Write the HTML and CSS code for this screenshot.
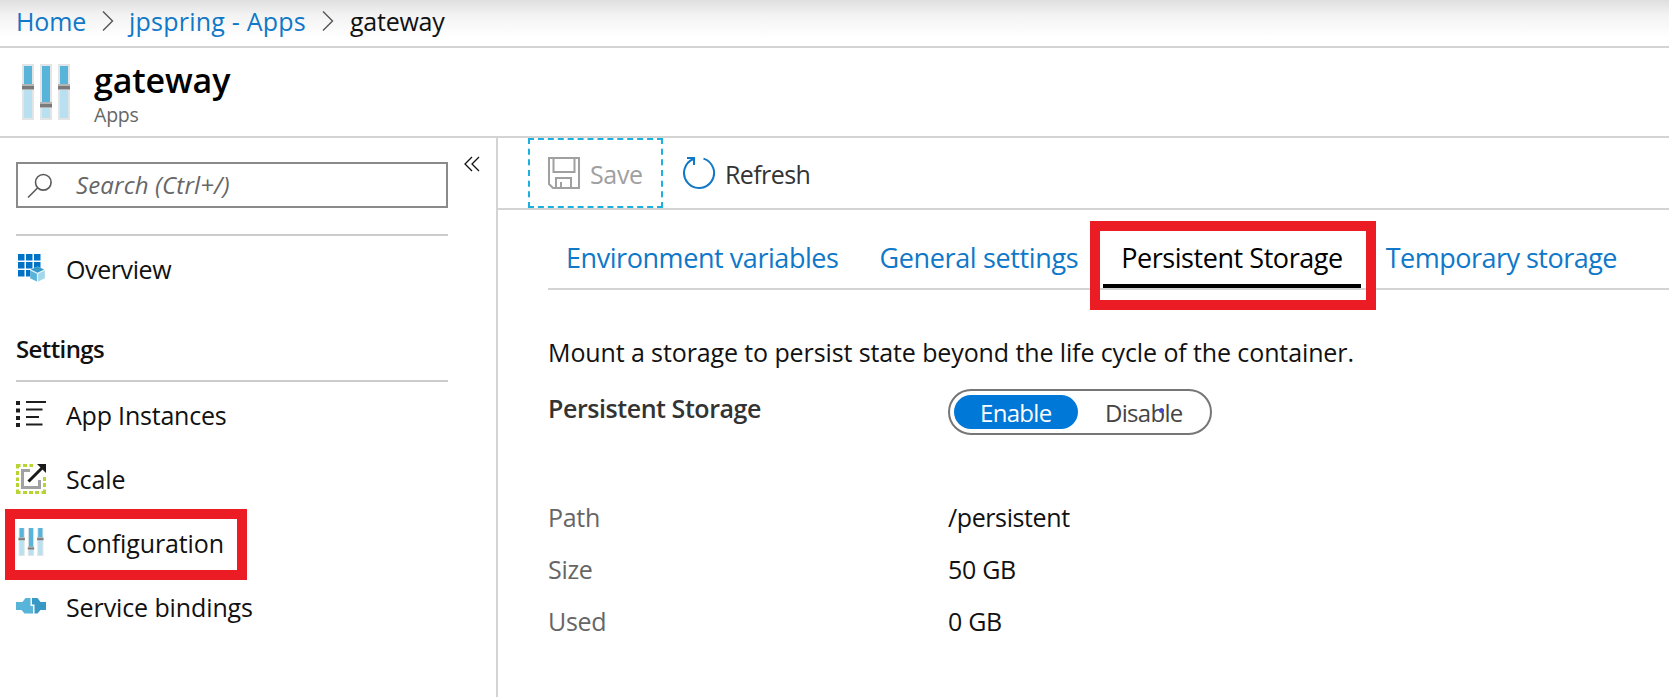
FILE: index.html
```html
<!DOCTYPE html>
<html lang="en">
<head>
<meta charset="utf-8">
<title>gateway - Configuration</title>
<link rel="stylesheet" href="styles.css">
</head>
<body>
<svg class="defs" aria-hidden="true">
  <defs>
    <g id="sliders">
      <path d="M0 0h12v56H0zM18 0h12v56H18zM36 0h12v56H36z" fill="#e2e4e5"/>
      <path d="M2 2h8v52H2zM20 2h8v52h-8zM38 2h8v52h-8z" fill="#b9e0f0"/>
      <path d="M2 2h8v19H2zM20 2h8v37h-8zM38 2h8v19h-8z" fill="#59b4d9"/>
      <path d="M0 20h12v6H0zM18 38h12v6H18zM36 20h12v6H36z" fill="#b5b5b5"/>
      <path d="M0 22h12v3H0zM18 40h12v3H18zM36 22h12v3H36z" fill="#7a7a7a"/>
    </g>
  </defs>
</svg>

<nav class="crumbs">
  <a class="crumb crumb-home">Home</a>
  <svg class="chevron" width="12" height="22" viewBox="0 0 12 22"><path d="M1 1.5 10.5 11 1 20.5"/></svg>
  <a class="crumb crumb-apps">jpspring - Apps</a>
  <svg class="chevron" width="12" height="22" viewBox="0 0 12 22"><path d="M1 1.5 10.5 11 1 20.5"/></svg>
  <span class="crumb crumb-current">gateway</span>
</nav>

<header class="header">
  <svg class="header-icon" width="48" height="56" viewBox="0 0 48 56"><use href="#sliders"/></svg>
  <div class="header-text">
    <h1 class="title">gateway</h1>
    <div class="subtitle">Apps</div>
  </div>
</header>

<div class="body">
  <aside class="sidebar">
    <div class="search-row">
      <div class="search">
        <svg width="26" height="26" viewBox="0 0 26 26" fill="none" stroke="#5a5a5a" stroke-width="1.6"><circle cx="16.3" cy="9.3" r="7.8"/><path d="M10.5 15 1 24.5"/></svg>
        <span class="placeholder">Search (Ctrl+/)</span>
      </div>
      <svg class="collapse" width="16" height="16" viewBox="0 0 16 16" fill="none" stroke="#111" stroke-width="1.3"><path d="M8 1 1 8l7 7M15 1 8 8l7 7"/></svg>
    </div>

    <div class="group-first">
      <a class="item item-overview">
        <svg width="30" height="30" viewBox="0 0 30 30">
          <path d="M2 0h6.500v6.500H2zM10 0h6.500v6.500H10zM18 0h6.500v6.500H18zM2 8h6.500v6.500H2zM10 8h6.500v6.500H10zM18 8h6.500v6.500H18zM2 16h6.500v6.500H2zM10 16h6.500v6.500H10z" fill="#0072c6"/>
          <path d="m21.500 12.500 7.300 3.300v8.400l-7.300 3.600-7.300-3.600v-8.400z" fill="#e6f4fa"/>
          <path d="m21.500 12.600 6.600 3-6.600 3.100-6.600-3.100z" fill="#3999c6"/>
          <path d="m14.200 16.600 6.700 3.200v7.800l-6.700-3.300z" fill="#59b4d9"/>
          <path d="m28.800 16.600-6.700 3.200v7.800l6.700-3.300z" fill="#a3d7ec"/>
        </svg>
        <span>Overview</span>
      </a>
    </div>

    <h2 class="group-title">Settings</h2>
    <div class="group">
      <a class="item item-instances">
        <svg width="30" height="30" viewBox="0 0 30 30" fill="#1e1e1e"><path d="M0 1h4v4H0zM0 8.500h4v4H0zM0 16h4v4H0zM0 23h4v4H0zM10 1h20v2H10zM10 8.500h16.500v2H10zM10 16h13v2H10zM10 23.500h16.500v2H10z"/></svg>
        <span>App Instances</span>
      </a>
      <a class="item item-scale">
        <svg width="30" height="30" viewBox="0 0 30 30" fill="none">
          <path d="M0 4.500V0h4.500v3H3v1.500zM7 0h4v3H7zM13.500 0H17v3h-3.500zM0 7h3v4H0zM0 13.500h3v3.500H0zM0 19h3v4H0zM0 25.500h3V27h1.500v3H0zM7 27h4v3H7zM13 27h4v3h-4zM19 27h4v3h-4zM25.500 27H27v-1.500h3V30h-4.500zM27 13h3v4h-3zM27 19h3v4h-3z" fill="#b8d432"/>
          <path d="M14 6.500H6.500v17h17V16" stroke="#a0a1a2" stroke-width="3"/>
          <path d="M12.500 17.500 26 4" stroke="#1a1a1a" stroke-width="3"/>
          <path d="M21 0h9v9z" fill="#1a1a1a"/>
        </svg>
        <span>Scale</span>
      </a>
      <a class="item item-config">
        <svg width="30" height="30" viewBox="-5 2 58 58"><use href="#sliders"/></svg>
        <span>Configuration</span>
        <i class="mark mark-config"></i>
      </a>
      <a class="item item-bindings">
        <svg width="30" height="30" viewBox="0 0 30 30">
          <path d="M0 10h6.500l3-4h5v8H17v7.500H8.500l-3-3.500H0z" fill="#59b4d9"/>
          <path d="M16 6h5.500l3 4H30v8h-5.500l-3 3.500h-3v-9H16z" fill="#3999c6"/>
        </svg>
        <span>Service bindings</span>
      </a>
    </div>
  </aside>

  <main class="main">
    <div class="toolbar">
      <button class="tool tool-save">
        <svg width="32" height="32" viewBox="0 0 32 32" fill="none" stroke="#a0a0a0" stroke-width="2"><path d="M1 1h30v30H5l-4-4zM5.500 1v14h21V1M8 31V21h15v10M13 31v-6"/></svg>
        <span>Save</span>
      </button>
      <button class="tool tool-refresh">
        <svg width="32" height="34" viewBox="0 0 32 34" fill="none" stroke="#0f78c8" stroke-width="2"><path d="M20.500 2.600A15 15 0 1 1 10.500 3M4 2h7v7"/></svg>
        <span>Refresh</span>
      </button>
    </div>

    <div class="tabs">
      <a class="tab">Environment variables</a>
      <a class="tab tab-general">General settings</a>
      <a class="tab tab-active">Persistent Storage<i class="mark mark-tab"></i></a>
      <a class="tab tab-temp">Temporary storage</a>
    </div>

    <section class="content">
      <p class="lead">Mount a storage to persist state beyond the life cycle of the container.</p>
      <div class="field">
        <div class="field-label">Persistent Storage</div>
        <div class="toggle">
          <span class="option option-on">Enable</span>
          <span class="option option-off">Disable<i class="dot"></i></span>
        </div>
      </div>
      <dl class="facts">
        <dt class="path-label">Path</dt><dd class="path-value">/persistent</dd>
        <dt class="size-label">Size</dt><dd>50 GB</dd>
        <dt class="used-label">Used</dt><dd>0 GB</dd>
      </dl>
    </section>
  </main>
</div>
</body>
</html>
```
FILE: styles.css
```css
* { box-sizing: border-box; }

body {
  margin: 0;
  height: 697px;
  display: flex;
  flex-direction: column;
  overflow: hidden;
  background: #fff;
  color: #111;
  font: 25px/40px "Open Sans", "Noto Sans", sans-serif;
}

.defs { position: absolute; width: 0; height: 0; }
svg { flex: none; display: block; }
h1, h2, p, dl, dd { margin: 0; }

/* Breadcrumbs */
.crumbs {
  flex: none;
  display: flex;
  align-items: flex-start;
  height: 48px;
  padding-left: 16px;
  border-bottom: 2px solid #d4d4d4;
  background: linear-gradient(#dfdfdf, #f3f3f3 15px, #fff 38px);
}
.crumb { padding-top: 1px; color: #0f78c8; white-space: nowrap; }
.crumb-home { width: 86px; letter-spacing: -.1px; }
.crumb-apps { width: 193px; margin-left: 15px; letter-spacing: .22px; }
.crumb-current { margin-left: 16px; color: #111; letter-spacing: -.25px; }
.chevron { margin-top: 10px; fill: none; stroke: #555; stroke-width: 1.4; }

/* Header */
.header {
  flex: none;
  display: flex;
  height: 90px;
  padding-left: 22px;
  border-bottom: 2px solid #d4d4d4;
}
.header-icon { margin-top: 16px; }
.header-text { padding: 10px 0 0 24px; }
.title { font-size: 34px; line-height: 44px; font-weight: 600; letter-spacing: -.15px; color: #000; }
.subtitle { margin-top: -1px; font-size: 19.5px; line-height: 28px; letter-spacing: -.2px; color: #666; }

.body { flex: 1; display: flex; min-height: 0; }

/* Sidebar */
.sidebar {
  flex: none;
  width: 498px;
  padding: 24px 0 0 16px;
  border-right: 2px solid #d4d4d4;
}
.search-row { display: flex; }
.search {
  display: flex;
  width: 432px;
  height: 46px;
  padding: 9px 0 0 9px;
  border: 2px solid #8a8a8a;
}
.placeholder {
  margin-left: 23px;
  font-size: 24px;
  line-height: 24px;
  font-style: italic;
  letter-spacing: .15px;
  color: #666;
}
.collapse { margin: -6px 0 0 16px; }
.group-first { width: 432px; margin-top: 26px; padding-top: 1px; border-top: 2px solid #ccc; }
.item { position: relative; display: flex; align-items: center; gap: 20px; height: 64px; letter-spacing: -.12px; }
.item-overview { letter-spacing: -.4px; }
.item-instances { letter-spacing: -.2px; }
.item-bindings { letter-spacing: -.11px; }
.group-title {
  width: 432px;
  height: 81px;
  padding-top: 28px;
  border-bottom: 2px solid #ccc;
  font-size: 24px;
  line-height: 40px;
  font-weight: 600;
  letter-spacing: -.6px;
}
.group { padding-top: 1px; }

/* Red highlight frames */
.mark { position: absolute; border: 10px solid #ec1c24; }
.mark-config { left: -11px; top: -2px; width: 242px; height: 71px; }
.mark-tab { left: -13px; top: 11px; width: 286px; height: 89px; }

/* Toolbar */
.main { flex: 1; min-width: 0; }
.toolbar {
  display: flex;
  gap: 20px;
  height: 72px;
  padding-left: 30px;
  border-bottom: 2px solid #d4d4d4;
}
.tool {
  display: flex;
  align-items: center;
  height: 70px;
  padding: 0;
  border: 0;
  background: none;
  font: inherit;
  color: #333;
}
.tool span { padding-top: 2px; }
.tool-save {
  width: 135px;
  gap: 10px;
  padding-left: 18px;
  border: 2px dashed #1bb0dd;
  color: #a0a0a0;
  letter-spacing: -.36px;
}
.tool-refresh { gap: 10px; letter-spacing: -.6px; }

/* Tabs */
.tabs {
  display: flex;
  gap: 8px;
  height: 80px;
  margin-left: 50px;
  border-bottom: 2px solid #d4d4d4;
  font-size: 27px;
}
.tab {
  position: relative;
  height: 78px;
  padding: 28px 16px 0 18px;
  color: #0f78c8;
  letter-spacing: -.44px;
  white-space: nowrap;
}
.tab-general { padding-left: 17px; padding-right: 17px; letter-spacing: -.37px; }
.tab-active { padding-right: 18px; color: #000; border-bottom: 4px solid #000; }
.tab-temp { padding-left: 17px; letter-spacing: -.52px; }

/* Content */
.content { padding: 42px 0 0 50px; }
.lead { white-space: nowrap; letter-spacing: -.11px; }
.field { display: flex; margin-top: 17px; }
.field-label { width: 400px; padding-top: 1px; line-height: 36px; font-weight: 600; letter-spacing: -.44px; color: #333; }
.toggle {
  display: flex;
  width: 264px;
  height: 46px;
  padding: 4px;
  border: 2px solid #767676;
  border-radius: 23px;
}
.option {
  position: relative;
  height: 34px;
  font-size: 24px;
  line-height: 36px;
  letter-spacing: -.7px;
}
.option-on { width: 124px; padding-left: 26px; border-radius: 17px; background: #0078d7; color: #fff; }
.option-off { padding-left: 27px; color: #444; }
.dot { position: absolute; left: 81px; top: 13px; width: 5px; height: 5px; border-radius: 50%; background: #4648c4; }
.facts {
  display: grid;
  grid-template-columns: 400px auto;
  grid-auto-rows: 52px;
  margin-top: 56px;
  line-height: 52px;
  letter-spacing: -.3px;
}
.facts dt { color: #666; letter-spacing: -.3px; }
.path-value { letter-spacing: -.4px; }
```
